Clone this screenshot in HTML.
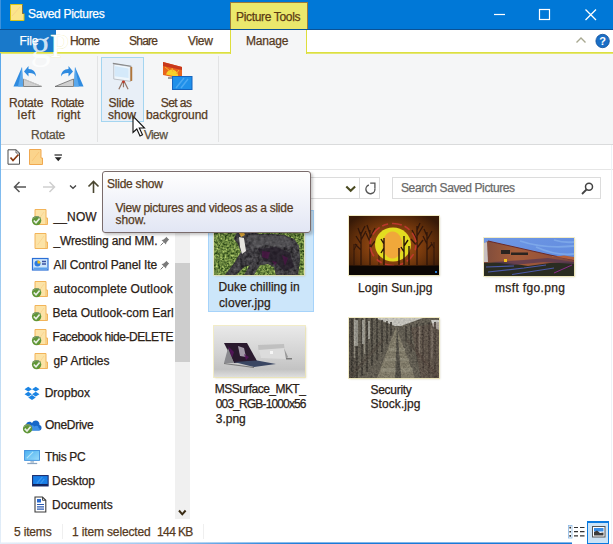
<!DOCTYPE html>
<html>
<head>
<meta charset="utf-8">
<title>Saved Pictures</title>
<style>
html,body{margin:0;padding:0}
body{width:613px;height:544px;position:relative;overflow:hidden;background:#fff;font:12px "Liberation Sans",sans-serif}
.a{position:absolute}
.t{position:absolute;white-space:nowrap;line-height:16px;font-size:12px;font-family:"Liberation Sans",sans-serif;-webkit-text-stroke:.25px}
svg{position:absolute;overflow:visible}
.th{box-shadow:0 0 0 1px rgba(236,228,170,.65),1px 1px 2px rgba(150,140,90,.35)}
</style>
</head>
<body>
<!-- title bar -->
<div class="a" style="left:0;top:0;width:613px;height:29px;background:#0078d7"></div>
<div class="a" style="left:0;top:0;width:1px;height:53px;background:#3d92dd"></div>
<!-- picture tools tab -->
<div class="a" style="left:230px;top:2px;width:78px;height:28px;background:#ebe86c;border:1px solid #9a7a3a;border-bottom:1px solid #d6d63c;box-sizing:border-box"></div>
<!-- tab row -->
<div class="a" style="left:0;top:29px;width:613px;height:23px;background:#fff;border-top:1px solid #0a5296;box-sizing:border-box"></div>
<div class="a" style="left:0;top:30px;width:56px;height:22px;background:#1979ca"></div>
<div class="a" style="left:0;top:52px;width:613px;height:2px;background:linear-gradient(#dce040 0,#dce040 55%,#eef0b0 100%)"></div>
<!-- manage tab -->
<div class="a" style="left:230px;top:30px;width:77px;height:24px;background:#f5f6f7;border-left:1px solid #dede3c;border-right:1px solid #dede3c;box-sizing:border-box"></div>
<!-- ribbon -->
<div class="a" style="left:0;top:54px;width:613px;height:90px;background:#f5f6f7"></div>
<div class="a" style="left:0;top:144px;width:613px;height:1px;background:#dadbdc"></div>
<div class="a" style="left:97px;top:56px;width:1px;height:86px;background:#e2e3e4"></div>
<div class="a" style="left:218px;top:56px;width:1px;height:86px;background:#e2e3e4"></div>
<!-- slide show hover -->
<div class="a" style="left:101px;top:57px;width:43px;height:65px;background:#e8eff7;border:1px solid #a4d5f0;box-sizing:border-box"></div>
<!-- qat / address separators -->
<div class="a" style="left:0;top:169px;width:613px;height:1px;background:#e6e6e6"></div>
<!-- left/right window borders -->
<div class="a" style="left:0;top:53px;width:1px;height:491px;background:linear-gradient(#5aa8ea,#7ab8ee 25%,#b8d8f4 60%,#e4eef8)"></div>
<div class="a" style="left:611px;top:145px;width:1px;height:399px;background:#eef2f7"></div>

<!-- address bar -->
<div class="a" style="left:103px;top:177px;width:277px;height:22px;border:1px solid #dcdcdc;box-sizing:border-box;background:#fff"></div>
<div class="a" style="left:359px;top:177px;width:1px;height:22px;background:#dcdcdc"></div>
<div class="a" style="left:392px;top:177px;width:209px;height:22px;border:1px solid #dcdcdc;box-sizing:border-box;background:#fff"></div>

<!-- nav scrollbar -->
<div class="a" style="left:175px;top:205px;width:15px;height:314px;background:#f0f0f0"></div>
<div class="a" style="left:175px;top:263px;width:15px;height:99px;background:#cdcdcd"></div>

<!-- selected item -->
<div class="a" style="left:208px;top:210px;width:106px;height:102px;background:#cce6fa;border:1px solid #a6d3fa;box-sizing:border-box"></div>

<!-- dog -->
<svg class="th" style="left:214px;top:215px" width="90" height="60" viewBox="0 0 90 60">
<defs><filter id="gn" color-interpolation-filters="sRGB" x="0" y="0" width="100%" height="100%"><feTurbulence type="fractalNoise" baseFrequency="0.45" numOctaves="2" seed="4"/><feColorMatrix type="matrix" values="0.95 0 0 0 -0.07  0.95 0 0 0 0.04  0.6 0 0 0 -0.06  0 0 0 0 1"/></filter>
<filter id="dn" color-interpolation-filters="sRGB" x="0" y="0" width="100%" height="100%"><feTurbulence type="fractalNoise" baseFrequency="0.3" numOctaves="2" seed="9"/><feColorMatrix type="matrix" values="0.5 0 0 0 -0.02  0.5 0 0 0 -0.03  0.5 0 0 0 -0.01  0 0 0 0 1"/></filter>
<clipPath id="dogc"><path d="M11,60 L21,47 L27,37 L24,29 L20,24 L22,19 L28,15 L38,15 L44,19 L56,19 L70,20 L80,24 L85,31 L86,44 L84,60 L62,60 L60,52 L54,49 L46,50 L42,56 L40,60 L30,60 L36,50 L30,52 L22,60 Z"/></clipPath></defs>
<rect width="90" height="60" fill="#5b8430"/>
<rect width="90" height="60" filter="url(#gn)"/>
<g clip-path="url(#dogc)"><rect width="90" height="60" fill="#4b4a4c"/><rect width="90" height="60" filter="url(#dn)" opacity=".8"/>
<path d="M34,20 L56,20 L72,22 L82,28 L70,32 L52,30 L38,34 Z" fill="#6c6c6e" opacity=".4"/><path d="M44,34 L62,32 L76,38 L80,52 L70,56 L62,48 L50,46 Z" fill="#241c28" opacity=".75"/><path d="M48,36 l8,1 l-2,7 l-6,-2z M68,40 l6,3 l-3,8z M58,46 l5,1 l-2,4z" fill="#5a1050" opacity=".55"/></g>
<path d="M25,22 l5,1 l2,13 l-4,3 l-2,-7 z" fill="#e6e4de"/>
<path d="M25,18 l5,-1 l1,3 l-4,2 z" fill="#e0a838"/>
</svg>
<!-- login sun -->
<svg class="th" style="left:349px;top:216px" width="90" height="59" viewBox="0 0 90 59">
<defs><radialGradient id="sg" cx="49%" cy="50%" r="62%"><stop offset="0" stop-color="#b25a12"/><stop offset=".4" stop-color="#8c4410"/><stop offset=".75" stop-color="#5c2c0a"/><stop offset="1" stop-color="#381a07"/></radialGradient></defs>
<rect width="90" height="59" fill="url(#sg)"/>
<g stroke="#24100a" fill="none" opacity=".8">
<path d="M12,49V16M12,28l-5,-8M12,24l5,-9M12,34l-6,-6M12,20l-3,-8M12,18l4,-8" stroke-width="1.300"/>
<path d="M21,49V14M21,26l-4,-9M21,22l5,-10M21,32l5,-7M21,18l-3,-9" stroke-width="1.300"/>
<path d="M68,49V10M68,24l-5,-10M68,20l6,-10M68,30l-6,-7M68,14l3,-7M68,32l6,-8" stroke-width="1.400"/>
<path d="M78,49V16M78,28l-4,-8M78,24l5,-9M78,34l5,-6M78,20l-3,-7" stroke-width="1.300"/>
<path d="M30,49V22M30,30l-3,-6M30,28l3,-7M85,49V26M85,32l-3,-6M5,49V28M5,34l3,-6" stroke-width="1"/>
</g>
<ellipse cx="44" cy="28.500" rx="23" ry="21" fill="none" stroke="#d23838" stroke-width="1.600" stroke-dasharray="6 4 10 3" opacity=".75"/>
<ellipse cx="44" cy="28.500" rx="18" ry="17" fill="#e3dc20"/>
<ellipse cx="43.500" cy="29" rx="10" ry="13.500" fill="#f0a83a"/>
<path d="M35,49V22M35,32l-3,5M35,28l-3,-5M55,49V20M55,30l4,-6M55,36l-3,-5M50,49V32M60,49V30" stroke="#2a1406" stroke-width="1.400" fill="none"/>
<rect x="0" y="49.500" width="90" height="9.500" fill="#0c0705"/>
<rect x="86" y="55" width="2" height="2" fill="#2a7ad0"/>
</svg>
<!-- msft -->
<svg class="th" style="left:484px;top:238px" width="90" height="38" viewBox="0 0 90 38">
<defs><linearGradient id="sky" x1="0" y1="0" x2="1" y2="1"><stop offset="0" stop-color="#7098e4"/><stop offset="1" stop-color="#5c88de"/></linearGradient>
<linearGradient id="bld" x1="0" y1="0" x2="1" y2="0"><stop offset="0" stop-color="#7e4c3c"/><stop offset=".35" stop-color="#a55d3a"/><stop offset=".7" stop-color="#96523a"/><stop offset="1" stop-color="#7a4640"/></linearGradient></defs>
<rect width="90" height="38" fill="url(#sky)"/>
<path d="M36,3 q24,8 54,5 M52,9 q20,9 38,7 M70,2 q10,3 20,2" stroke="#86b0ec" stroke-width="1.800" fill="none" opacity=".7"/>
<path d="M0,12 L2,4 L4,3 L66,17 L90,22 L90,30 L0,30 Z" fill="url(#bld)"/>
<path d="M4,3 L66,17 L90,22" stroke="#6a2a2a" stroke-width="1" fill="none"/>
<path d="M0,5 L3,4 L4,24 L0,24z" fill="#c8c0c0"/>
<path d="M68,19 L80,17.500 L90,19 L90,22 L68,18z" fill="#b4603c"/>
<path d="M0,25 L20,24 L44,28 L66,25 L90,24 L90,38 L0,38Z" fill="#2a2c22"/>
<path d="M8,24 L40,22 L64,20 L90,24 L90,26 L60,24 L30,27Z" fill="#5a3a52" opacity=".8"/>
<path d="M4,34 L40,30 L62,27 M28,36.500 L70,30 M2,29 L30,28" stroke="#4a58a6" stroke-width="1.200" fill="none"/>
<rect x="17" y="12" width="9" height="4" fill="#2a2420"/><rect x="27" y="14.500" width="17" height="2.500" fill="#2a2420"/>
<rect x="20" y="21" width="3" height="3" fill="#f0c020"/>
<path d="M70,35 l18,-8" stroke="#8a2a8a" stroke-width="1"/>
</svg>
<!-- security -->
<svg class="th" style="left:349px;top:317.500px;overflow:hidden" width="90" height="60" viewBox="0 0 90 60">
<defs><filter id="sn" color-interpolation-filters="sRGB" x="0" y="0" width="100%" height="100%"><feTurbulence type="fractalNoise" baseFrequency="0.55" numOctaves="2" seed="7"/><feColorMatrix type="matrix" values="1.0 0 0 0 -0.13  0.95 0 0 0 -0.12  0.85 0 0 0 -0.11  0 0 0 0 1"/></filter></defs>
<rect width="90" height="60" fill="#625d52"/>
<path d="M26,0 L74,0 L52,8 L46,8 Z" fill="#e2e2dc"/>
<path d="M82,2 L90,2 L90,12 L84,9z" fill="#ecece8"/>
<path d="M47,9 L66,60 L28,60 Z" fill="#8a8470"/>
<path d="M48,9 L52,60 L46,60 Z" fill="#55524a"/>
<path d="M0,0H8V60H0z" fill="#4e4840"/>
<path d="M3,0V60M8,0V60M13,0V58M18,0V54M23,0V48M28,0V42M33,2V34M38,3V26M42,4V18" stroke="#35312c" stroke-width="1.6"/>
<path d="M86,4V60M80,4V58M74,5V52M68,6V44M62,7V34M57,8V24" stroke="#3c3832" stroke-width="1.600"/>
<path d="M5.500,0V40M15.500,0V36M70.500,8V36M83,10V40" stroke="#a6a294" stroke-width="1.400" opacity=".8"/>
<path d="M0,60 L34,22 M90,60 L58,22" stroke="#4a4038" stroke-width="3" opacity=".6"/>
<path d="M5,2h4v26h-4z M13,2h2.500v24h-2.500z M19,3h2v18h-2z" fill="#c4c4bc" opacity=".75"/><path d="M62,10 L90,4 L90,60 L72,60 Z" fill="#5a3c34" opacity=".3"/><path d="M40,30h16v3h-16z M36,40h24v3h-24z M32,50h32v4h-32z" fill="#a8a490" opacity=".55"/><path d="M48,9 L52,60 L47,60 Z" fill="#4a4740"/><rect width="90" height="60" filter="url(#sn)" opacity=".25"/>
</svg>
<!-- surface -->
<svg class="th" style="left:214px;top:326px" width="91" height="51" viewBox="0 0 91 51">
<defs><linearGradient id="sf" x1="0" y1="0" x2="0" y2="1"><stop offset="0" stop-color="#e9e9e9"/><stop offset=".55" stop-color="#d2d2d2"/><stop offset=".85" stop-color="#c3c3c3"/><stop offset="1" stop-color="#dedede"/></linearGradient></defs>
<rect width="91" height="51" fill="url(#sf)"/>
<path d="M44,19 L70,18 L72,33 L47,32 Z" fill="#dcdcdc"/>
<path d="M44,19 L70,18 L70.500,22 L44.500,24 Z" fill="#c0c0c0"/>
<path d="M70,22 L74,31 L72,33z" fill="#9a9a9a"/>
<rect x="56" y="25" width="3" height="3" fill="#f6f6f6"/>
<path d="M72,32 l6,0 l0,1.500 l-6,0z" fill="#7a7a7a"/>
<path d="M10,17 L33,17 L43,35 L20,37 Z" fill="#2a1a2e"/>
<path d="M24,20 l6,2 l2,9 l-6,-1z" fill="#c9c4d0" opacity=".75"/>
<path d="M14,20 l6,6 l-2,6z M30,28 l5,3 l-3,3z" fill="#5a1460" opacity=".8"/>
<path d="M14,22 L10,37 L20,37 Z" fill="#8a8a8e"/>
<path d="M20,36 L43,34.500 L62,38 L40,41 Z" fill="#3a4662"/>
<path d="M10,37 L40,41 L40,42 L10,38z" fill="#777"/>
</svg>


<!-- tooltip -->
<div class="a" style="left:102px;top:171px;width:209px;height:62px;box-sizing:border-box;border:1px solid #7a6c6c;border-radius:3px;background:linear-gradient(#ffffff,#f4f5fa 40%,#e2e6f4);box-shadow:2px 2px 3px rgba(0,0,0,.22)"></div>

<!-- status bar -->
<div class="a" style="left:62px;top:524px;width:1px;height:15px;background:#efefef"></div>
<div class="a" style="left:203px;top:524px;width:1px;height:15px;background:#efefef"></div>
<div class="a" style="left:0;top:542px;width:572px;height:1px;opacity:.55;background:linear-gradient(90deg,#e6eef8,#c4dcf4 80px,#8cbcec 180px,#3a8ede 260px,#1a7ad8 310px)"></div>
<div class="a" style="left:0;top:543px;width:572px;height:1px;background:linear-gradient(90deg,#e6eef8,#c4dcf4 80px,#8cbcec 180px,#3a8ede 260px,#1a7ad8 310px)"></div>
<div class="a" style="left:587px;top:521px;width:22px;height:23px;background:#cce4f7;border:1px solid #0a7ae0;border-top-width:2px;box-sizing:border-box"></div>

<!-- title folder -->
<svg style="left:10px;top:4px" width="15" height="18" viewBox="0 0 15 18"><path d="M0.500,0.500H12.500V9.500H14V16.500H0.500Z" fill="#fbe58a" stroke="#d9c516" stroke-width="1"/><path d="M12.500,0.500V9.500H14" fill="none" stroke="#1c1c70" stroke-width=".8" opacity=".6"/><path d="M2,12 L10,3" stroke="#f6c98a" stroke-width="1" opacity=".7"/></svg>
<!-- window controls -->
<svg style="left:494px;top:8px" width="110" height="14" viewBox="0 0 110 14"><path d="M0,6.500H11" stroke="#fff" stroke-width="1.200"/><rect x="45.500" y="1.500" width="10" height="10" fill="none" stroke="#fff" stroke-width="1.200"/><path d="M91.500,1.500L102,12M102,1.500L91.500,12" stroke="#fff" stroke-width="1.300"/></svg>
<!-- chevron + help -->
<svg style="left:576px;top:33px" width="36" height="16" viewBox="0 0 36 16"><path d="M0.500,9.500L5,5L9.500,9.500" fill="none" stroke="#a8a890" stroke-width="1.400"/><circle cx="26.600" cy="8" r="6.700" fill="#1b6fc6" stroke="#0d4f9a" stroke-width=".8"/><text x="26.500" y="12" text-anchor="middle" font-family="Liberation Sans, sans-serif" font-size="11" font-weight="700" fill="#fff">?</text></svg>
<!-- gP watermark -->
<svg style="left:0;top:0" width="90" height="75" viewBox="0 0 90 75"><text x="30.500" y="58" font-family="Liberation Serif, serif" font-size="40" fill="#ffffff" fill-opacity=".78">g</text><text x="50" y="57" font-family="Liberation Serif, serif" font-size="34" fill="#ffffff" stroke="#f0edb0" stroke-width=".6" paint-order="stroke">P</text></svg>
<!-- rotate left -->
<svg style="left:13px;top:64px" width="30" height="24" viewBox="0 0 30 24"><path d="M9,3L10,22.500H0.500Z" fill="#2f8be0"/><path d="M5,22.500L9,3L10,22.500Z" fill="#5aa8ec"/><path d="M10.500,15L29,22.500H10.500Z" fill="#d0d0d0" stroke="#5a5a5a" stroke-width=".7"/><path d="M10.500,15L29,22.500" stroke="#f2f2f2" stroke-width=".6"/><path d="M11,7.500L15.500,2V5C20,5 23,8 23,12.500C21.500,9.500 19,8.800 15.500,9V12.500Z" fill="#2f8be0"/></svg>
<!-- rotate right -->
<svg style="left:54px;top:64px" width="30" height="24" viewBox="0 0 30 24"><g transform="translate(30,0) scale(-1,1)"><path d="M9,3L10,22.500H0.500Z" fill="#2f8be0"/><path d="M5,22.500L9,3L10,22.500Z" fill="#5aa8ec"/><path d="M10.500,15L29,22.500H10.500Z" fill="#d0d0d0" stroke="#5a5a5a" stroke-width=".7"/><path d="M11,7.500L15.500,2V5C20,5 23,8 23,12.500C21.500,9.500 19,8.800 15.500,9V12.500Z" fill="#2f8be0"/></g></svg>
<!-- slide show -->
<svg style="left:110.500px;top:62px" width="24" height="28.500" viewBox="0 0 26 30"><path d="M13,20L8.500,29M14,20L18.500,29M13.500,20V27" stroke="#94776a" stroke-width="1.300" fill="none"/><path d="M3,1.500L21,4.500V20.500L3,18Z" fill="#eef6fc" stroke="#b9bcc2" stroke-width="1"/><path d="M4,4L19,6.500V17L4,15Z" fill="#d4e9fa"/><path d="M21,4.500L23,5V20L21,20.500Z" fill="#b0763a"/><path d="M2,1L22,4.200" stroke="#8a8a8a" stroke-width="1.300"/><circle cx="13.500" cy="21" r="1.500" fill="#c03a2a"/></svg>
<!-- set as background -->
<svg style="left:162px;top:61px" width="32" height="30" viewBox="0 0 32 30"><path d="M1,1L20,6V18L1,14Z" fill="#e8641c"/><path d="M1,1L20,6V9L1,5Z" fill="#c8381c"/><path d="M4,13.500A6,6 0 0 1 16,16L4,13.500Z" fill="#f6d02a"/><path d="M3,6l5,4M10,7l1,4M17,9l-3,4" stroke="#f6b02a" stroke-width="1"/><rect x="10.500" y="15.500" width="19.500" height="13" fill="#1f90ea" stroke="#1565c0" stroke-width="1"/><path d="M14,27L22,17M19,27L26,18" stroke="#4aa8f2" stroke-width="1.500"/><path d="M6,17h4" stroke="#444" stroke-width="1"/></svg>
<!-- cursor -->
<svg style="left:132px;top:115px" width="14" height="22" viewBox="0 0 14 22"><path d="M1,1V17.500L4.800,14L8,21L10.500,19.800L7.300,13H12.500Z" fill="#fff" stroke="#111" stroke-width="1.100" stroke-linejoin="miter"/></svg>
<!-- QAT -->
<svg style="left:7px;top:149px" width="14" height="16" viewBox="0 0 14 16"><path d="M1,0.800H9L12.500,4V15.200H1Z" fill="#fff" stroke="#4a4a4a" stroke-width="1"/><path d="M9,0.800V4H12.500" fill="none" stroke="#4a4a4a" stroke-width=".8"/><path d="M3.500,8.500L6,11.500L11.500,5.500" fill="none" stroke="#8a3a10" stroke-width="1.700"/></svg>
<svg style="left:29px;top:149px" width="15" height="16" viewBox="0 0 15 16"><path d="M0.500,0.500H12V9H13.500V15.500H0.500Z" fill="#fbd48c" stroke="#f0a850" stroke-width="1"/><path d="M3,12L10,3" stroke="#f8c070" stroke-width="1" opacity=".7"/></svg>
<svg style="left:54px;top:154px" width="9" height="8" viewBox="0 0 9 8"><path d="M0.500,1H8" stroke="#222" stroke-width="1.200"/><path d="M0.800,3.300H7.700L4.250,7.200Z" fill="#222"/></svg>
<!-- nav arrows -->
<svg style="left:13px;top:180px" width="90" height="14" viewBox="0 0 90 14"><path d="M13,7H2M6.500,2L1.500,7L6.500,12" fill="none" stroke="#555" stroke-width="1.500"/><path d="M30,7H41M36.500,2L41.500,7L36.500,12" fill="none" stroke="#cfcfcf" stroke-width="1.500"/><path d="M57,5.500L60,8.300L63,5.500" fill="none" stroke="#444" stroke-width="1.300"/><path d="M80.500,13V2M75.500,6.500L80.500,1.500L85.500,6.500" fill="none" stroke="#4a4630" stroke-width="1.600"/></svg>
<!-- addr chevron, refresh, search -->
<svg style="left:345px;top:180px" width="34" height="15" viewBox="0 0 34 15"><path d="M1.300,6.500L5.700,10.800L10.100,6.500" fill="none" stroke="#4a4a20" stroke-width="2.100"/><path d="M23.86,4.97A4.5,4.5 0 1 0 29.80,8.26" fill="none" stroke="#555" stroke-width="1.400"/><path d="M25.200,3.200H29.900V8" fill="none" stroke="#555" stroke-width="1.300"/></svg>
<svg style="left:581px;top:182px" width="13" height="13" viewBox="0 0 13 13"><circle cx="8" cy="4.800" r="3.500" fill="none" stroke="#444" stroke-width="1.500"/><path d="M5.500,7.500L1,12" stroke="#444" stroke-width="1.800"/></svg>
<!-- nav folders -->
<svg width="0" height="0" style="left:0;top:0"><defs>
<g id="fld"><path d="M0.500,0.500H11.500V9H13V15.500H0.500Z" fill="#fce3a6" stroke="#f2b45a" stroke-width="1"/><path d="M11.500,9V15.500" stroke="#f2b45a" stroke-width=".8"/><path d="M3,12L9.500,3" stroke="#f9d08a" stroke-width="1" opacity=".7"/></g>
<g id="chk"><circle cx="4.600" cy="3.300" r="4.700" fill="#5f9636"/><path d="M1,1.500A4.700,4.700 0 0 1 8.600,1" fill="none" stroke="#8a9a80" stroke-width="1"/><path d="M1.800,3.200L4,5.500L7.600,1.200" fill="none" stroke="#e8eee4" stroke-width="1.700"/></g>
<g id="pin"><path d="M6.200,0.800L9.200,3.800L8.300,4.300L6.300,6.800L6,8.500L1.500,4L3.200,3.700L5.700,1.700Z" fill="#7a7a7a"/><path d="M3.500,6.500L0.600,9.400" stroke="#7a7a7a" stroke-width="1"/></g>
</defs></svg>
<svg style="left:32px;top:209px" width="16" height="17" viewBox="0 0 16 17"><use href="#fld" x="2.500" y="0"/><use href="#chk" x="0" y="8.300"/></svg>
<svg style="left:32px;top:233px" width="16" height="17" viewBox="0 0 16 17"><use href="#fld" x="2.500" y="0"/></svg>
<svg style="left:32px;top:281px" width="16" height="17" viewBox="0 0 16 17"><use href="#fld" x="2.500" y="0"/><use href="#chk" x="0" y="8.300"/></svg>
<svg style="left:32px;top:305px" width="16" height="17" viewBox="0 0 16 17"><use href="#fld" x="2.500" y="0"/><use href="#chk" x="0" y="8.300"/></svg>
<svg style="left:32px;top:329px" width="16" height="17" viewBox="0 0 16 17"><use href="#fld" x="2.500" y="0"/><use href="#chk" x="0" y="8.300"/></svg>
<svg style="left:32px;top:353px" width="16" height="17" viewBox="0 0 16 17"><use href="#fld" x="2.500" y="0"/><use href="#chk" x="0" y="8.300"/></svg>
<!-- control panel -->
<svg style="left:32px;top:258px" width="17" height="13" viewBox="0 0 17 13"><rect x="0.500" y="0.500" width="15.500" height="11.500" fill="#cfe6fb" stroke="#2a6fd6" stroke-width="1.200"/><circle cx="5.500" cy="5.500" r="3" fill="#2a7ae0"/><path d="M5.500,5.500V2.500A3,3 0 0 1 8.500,5.500Z" fill="#f4c01a"/><path d="M10,3.500H14M10,6H14" stroke="#3a50a0" stroke-width="1.300"/><rect x="1.500" y="9.500" width="13.500" height="2" fill="#5aa0ec"/></svg>
<!-- pins -->
<svg style="left:160px;top:236px" width="10" height="10" viewBox="0 0 10 10"><use href="#pin"/></svg>
<svg style="left:160px;top:260px" width="10" height="10" viewBox="0 0 10 10"><use href="#pin"/></svg>
<!-- dropbox -->
<svg style="left:24px;top:385.500px" width="16" height="15.500" viewBox="0 0 18 17"><g fill="#1a84e4"><path d="M4.800,0.500L9,3.300L4.800,6L0.600,3.300Z"/><path d="M13.200,0.500L17.400,3.300L13.200,6L9,3.300Z"/><path d="M4.800,6.200L9,9L4.800,11.700L0.600,9Z"/><path d="M13.200,6.200L17.400,9L13.200,11.700L9,9Z"/><path d="M4.800,12.600L9,10L13.200,12.600L9,15.400Z"/></g></svg>
<!-- onedrive -->
<svg style="left:23px;top:419px" width="19" height="15" viewBox="0 0 19 15"><path d="M3,11.500C0.500,11.500 0.500,7.500 3,7C2.500,3 7,1.500 9,4C11,0 17,1 16.500,6C19.500,6.500 19,11.500 16.500,11.500Z" fill="#1767c8"/><path d="M6,11.500C4,11.500 4,8.500 6.500,8.300C7,6 10,5.500 11.500,7.500C13,6 16,7 15.500,9C17.500,9.300 17,11.500 15.500,11.500Z" fill="#3d8fe6"/><use href="#chk" x="0" y="6.500"/></svg>
<!-- this pc -->
<svg style="left:24px;top:450px" width="16.500" height="15.300" viewBox="0 0 18 17"><defs><linearGradient id="pcg" x1="0" y1="0" x2="1" y2="1"><stop offset="0" stop-color="#4ab0f0"/><stop offset="1" stop-color="#9adcfa"/></linearGradient></defs><rect x="0.500" y="0.500" width="16.500" height="11" fill="url(#pcg)" stroke="#3a8edc" stroke-width="1"/><path d="M3,9L10,2" stroke="#c4ecfc" stroke-width="1.200" opacity=".8"/><path d="M7,12.500H11V14H7Z" fill="#9ab0c4"/><path d="M3.500,15H14.500" stroke="#8aa4c0" stroke-width="1.400"/></svg>
<!-- desktop -->
<svg style="left:31.500px;top:475px" width="17" height="12.300" viewBox="0 0 18 13"><rect x="0.600" y="0.600" width="16.500" height="11" fill="#1a7ee6" stroke="#1a2a6a" stroke-width="1.100"/><path d="M5,9L11,2M9,9L13,4" stroke="#3a98f0" stroke-width="1.300"/><rect x="1" y="9.500" width="15.800" height="2" fill="#14225a"/></svg>
<!-- documents -->
<svg style="left:34px;top:496px" width="13" height="17" viewBox="0 0 13 17"><path d="M1,1H8.500L11.800,4.300V16H1Z" fill="#fff" stroke="#3c3c3c" stroke-width="1.100"/><path d="M8.500,1V4.300H11.800" fill="none" stroke="#3c3c3c" stroke-width=".9"/><rect x="3" y="3" width="4" height="3.500" fill="#2a6ad0"/><path d="M3,8.500H10M3,10.800H10M3,13.200H10" stroke="#2a58b0" stroke-width="1.200"/></svg>
<!-- scroll arrow -->
<svg style="left:177.500px;top:508.600px" width="9" height="8" viewBox="0 0 9 8"><path d="M1,1.500L4.300,5.300L7.600,1.500" fill="none" stroke="#3a2c14" stroke-width="2"/></svg>
<!-- view icons -->
<svg style="left:568px;top:525px" width="19" height="14" viewBox="0 0 19 14"><rect x="0.500" y="0.500" width="3.500" height="12.500" fill="#fff" stroke="#8ab8e6" stroke-width=".8"/><path d="M2.200,2.500v.1M2.200,6.700v.1M2.200,10.900v.1" stroke="#333" stroke-width="1.600" stroke-linecap="square"/><path d="M6,2.500H10M12,2.500H16.500M6,6.700H10M12,6.700H16.500M6,10.900H10M12,10.900H16.500" stroke="#333" stroke-width="1.200"/></svg>
<svg style="left:592px;top:526px" width="14" height="12" viewBox="0 0 14 12"><rect x="0.500" y="0.500" width="12.500" height="10.500" fill="#fff" stroke="#555" stroke-width="1"/><rect x="2" y="2" width="9.500" height="3.500" fill="#3a8ee6"/><path d="M2,9.500V6L5,4.500L8,7L11.500,6.500V9.500Z" fill="#3c3c3c"/></svg>


<span class="t" style="left:28.00px;top:6.3px;color:#ffffff;letter-spacing:-0.308px">Saved Pictures</span>
<span class="t" style="left:236.00px;top:8.6px;color:#5b3a12;letter-spacing:-0.333px">Picture Tools</span>
<span class="t" style="left:19.50px;top:33.4px;color:#ffffff;letter-spacing:-0.167px">File</span>
<span class="t" style="left:70.00px;top:33.4px;color:#553a1e;letter-spacing:-0.667px">Home</span>
<span class="t" style="left:129.00px;top:33.4px;color:#553a1e;letter-spacing:-0.750px">Share</span>
<span class="t" style="left:188.00px;top:33.4px;color:#553a1e;letter-spacing:-0.333px">View</span>
<span class="t" style="left:246.00px;top:33.4px;color:#553a1e;letter-spacing:-0.200px">Manage</span>
<span class="t" style="left:9.00px;top:94.8px;color:#553a1e;letter-spacing:-0.200px">Rotate</span>
<span class="t" style="left:17.50px;top:106.8px;color:#553a1e;letter-spacing:0.500px">left</span>
<span class="t" style="left:51.00px;top:94.8px;color:#553a1e;letter-spacing:-0.440px">Rotate</span>
<span class="t" style="left:57.00px;top:106.8px;color:#553a1e;letter-spacing:0.000px">right</span>
<span class="t" style="left:31.00px;top:126.8px;color:#5a5040;letter-spacing:-0.240px">Rotate</span>
<span class="t" style="left:108.40px;top:94.8px;color:#553a1e;letter-spacing:-0.150px">Slide</span>
<span class="t" style="left:108.00px;top:106.8px;color:#553a1e;letter-spacing:0.000px">show</span>
<span class="t" style="left:160.80px;top:94.8px;color:#553a1e;letter-spacing:-0.580px">Set as</span>
<span class="t" style="left:146.00px;top:106.8px;color:#553a1e;letter-spacing:-0.089px">background</span>
<span class="t" style="left:144.00px;top:126.8px;color:#5a5040;letter-spacing:-0.667px">View</span>
<span class="t" style="left:107.00px;top:176.3px;color:#553a1e;letter-spacing:-0.233px">Slide show</span>
<span class="t" style="left:115.60px;top:200.1px;color:#553a1e;letter-spacing:-0.259px">View pictures and videos as a slide</span>
<span class="t" style="left:115.60px;top:212.1px;color:#553a1e;letter-spacing:-0.075px">show.</span>
<span class="t" style="left:401.00px;top:180.1px;color:#6a6a6a;letter-spacing:-0.400px">Search Saved Pictures</span>
<span class="t" style="left:53.50px;top:208.8px;color:#2b2116;letter-spacing:0.125px">__NOW</span>
<span class="t" style="left:53.50px;top:232.8px;color:#2b2116;letter-spacing:-0.147px">_Wrestling and MM.</span>
<span class="t" style="left:53.50px;top:256.8px;color:#2b2116;letter-spacing:-0.125px">All Control Panel Ite</span>
<span class="t" style="left:53.50px;top:280.8px;color:#2b2116;letter-spacing:0.132px">autocomplete Outlook</span>
<span class="t" style="left:52.50px;top:304.8px;color:#2b2116;letter-spacing:0.025px">Beta Outlook-com Earl</span>
<span class="t" style="left:52.50px;top:328.8px;color:#2b2116;letter-spacing:-0.447px">Facebook hide-DELETE</span>
<span class="t" style="left:53.50px;top:352.8px;color:#2b2116;letter-spacing:-0.050px">gP Articles</span>
<span class="t" style="left:44.70px;top:384.8px;color:#2b2116;letter-spacing:-0.017px">Dropbox</span>
<span class="t" style="left:45.00px;top:416.8px;color:#2b2116;letter-spacing:-0.286px">OneDrive</span>
<span class="t" style="left:45.00px;top:448.8px;color:#2b2116;letter-spacing:-0.333px">This PC</span>
<span class="t" style="left:52.00px;top:472.8px;color:#2b2116;letter-spacing:-0.167px">Desktop</span>
<span class="t" style="left:52.00px;top:496.8px;color:#2b2116;letter-spacing:0.000px">Documents</span>
<span class="t" style="left:14.00px;top:524px;color:#553a1e;letter-spacing:-0.167px">5 items</span>
<span class="t" style="left:72.00px;top:524px;color:#553a1e;letter-spacing:-0.143px">1 item selected</span>
<span class="t" style="left:157.00px;top:524px;color:#553a1e;letter-spacing:-0.600px">144 KB</span>
<span class="t" style="left:218.60px;top:279.2px;color:#2b2116;letter-spacing:0.027px">Duke chilling in</span>
<span class="t" style="left:219.00px;top:294.8px;color:#2b2116;letter-spacing:0.111px">clover.jpg</span>
<span class="t" style="left:358.00px;top:279.8px;color:#2b2116;letter-spacing:0.083px">Login Sun.jpg</span>
<span class="t" style="left:495.00px;top:279.8px;color:#2b2116;letter-spacing:0.364px">msft fgo.png</span>
<span class="t" style="left:214.80px;top:381.3px;color:#2b2116;letter-spacing:-0.538px">MSSurface_MKT_</span>
<span class="t" style="left:215.80px;top:395.8px;color:#2b2116;letter-spacing:-0.857px">003_RGB-1000x56</span>
<span class="t" style="left:215.80px;top:410.8px;color:#2b2116;letter-spacing:-0.025px">3.png</span>
<span class="t" style="left:370.50px;top:381.8px;color:#2b2116;letter-spacing:-0.286px">Security</span>
<span class="t" style="left:370.50px;top:395.8px;color:#2b2116;letter-spacing:0.075px">Stock.jpg</span>
</body>
</html>
